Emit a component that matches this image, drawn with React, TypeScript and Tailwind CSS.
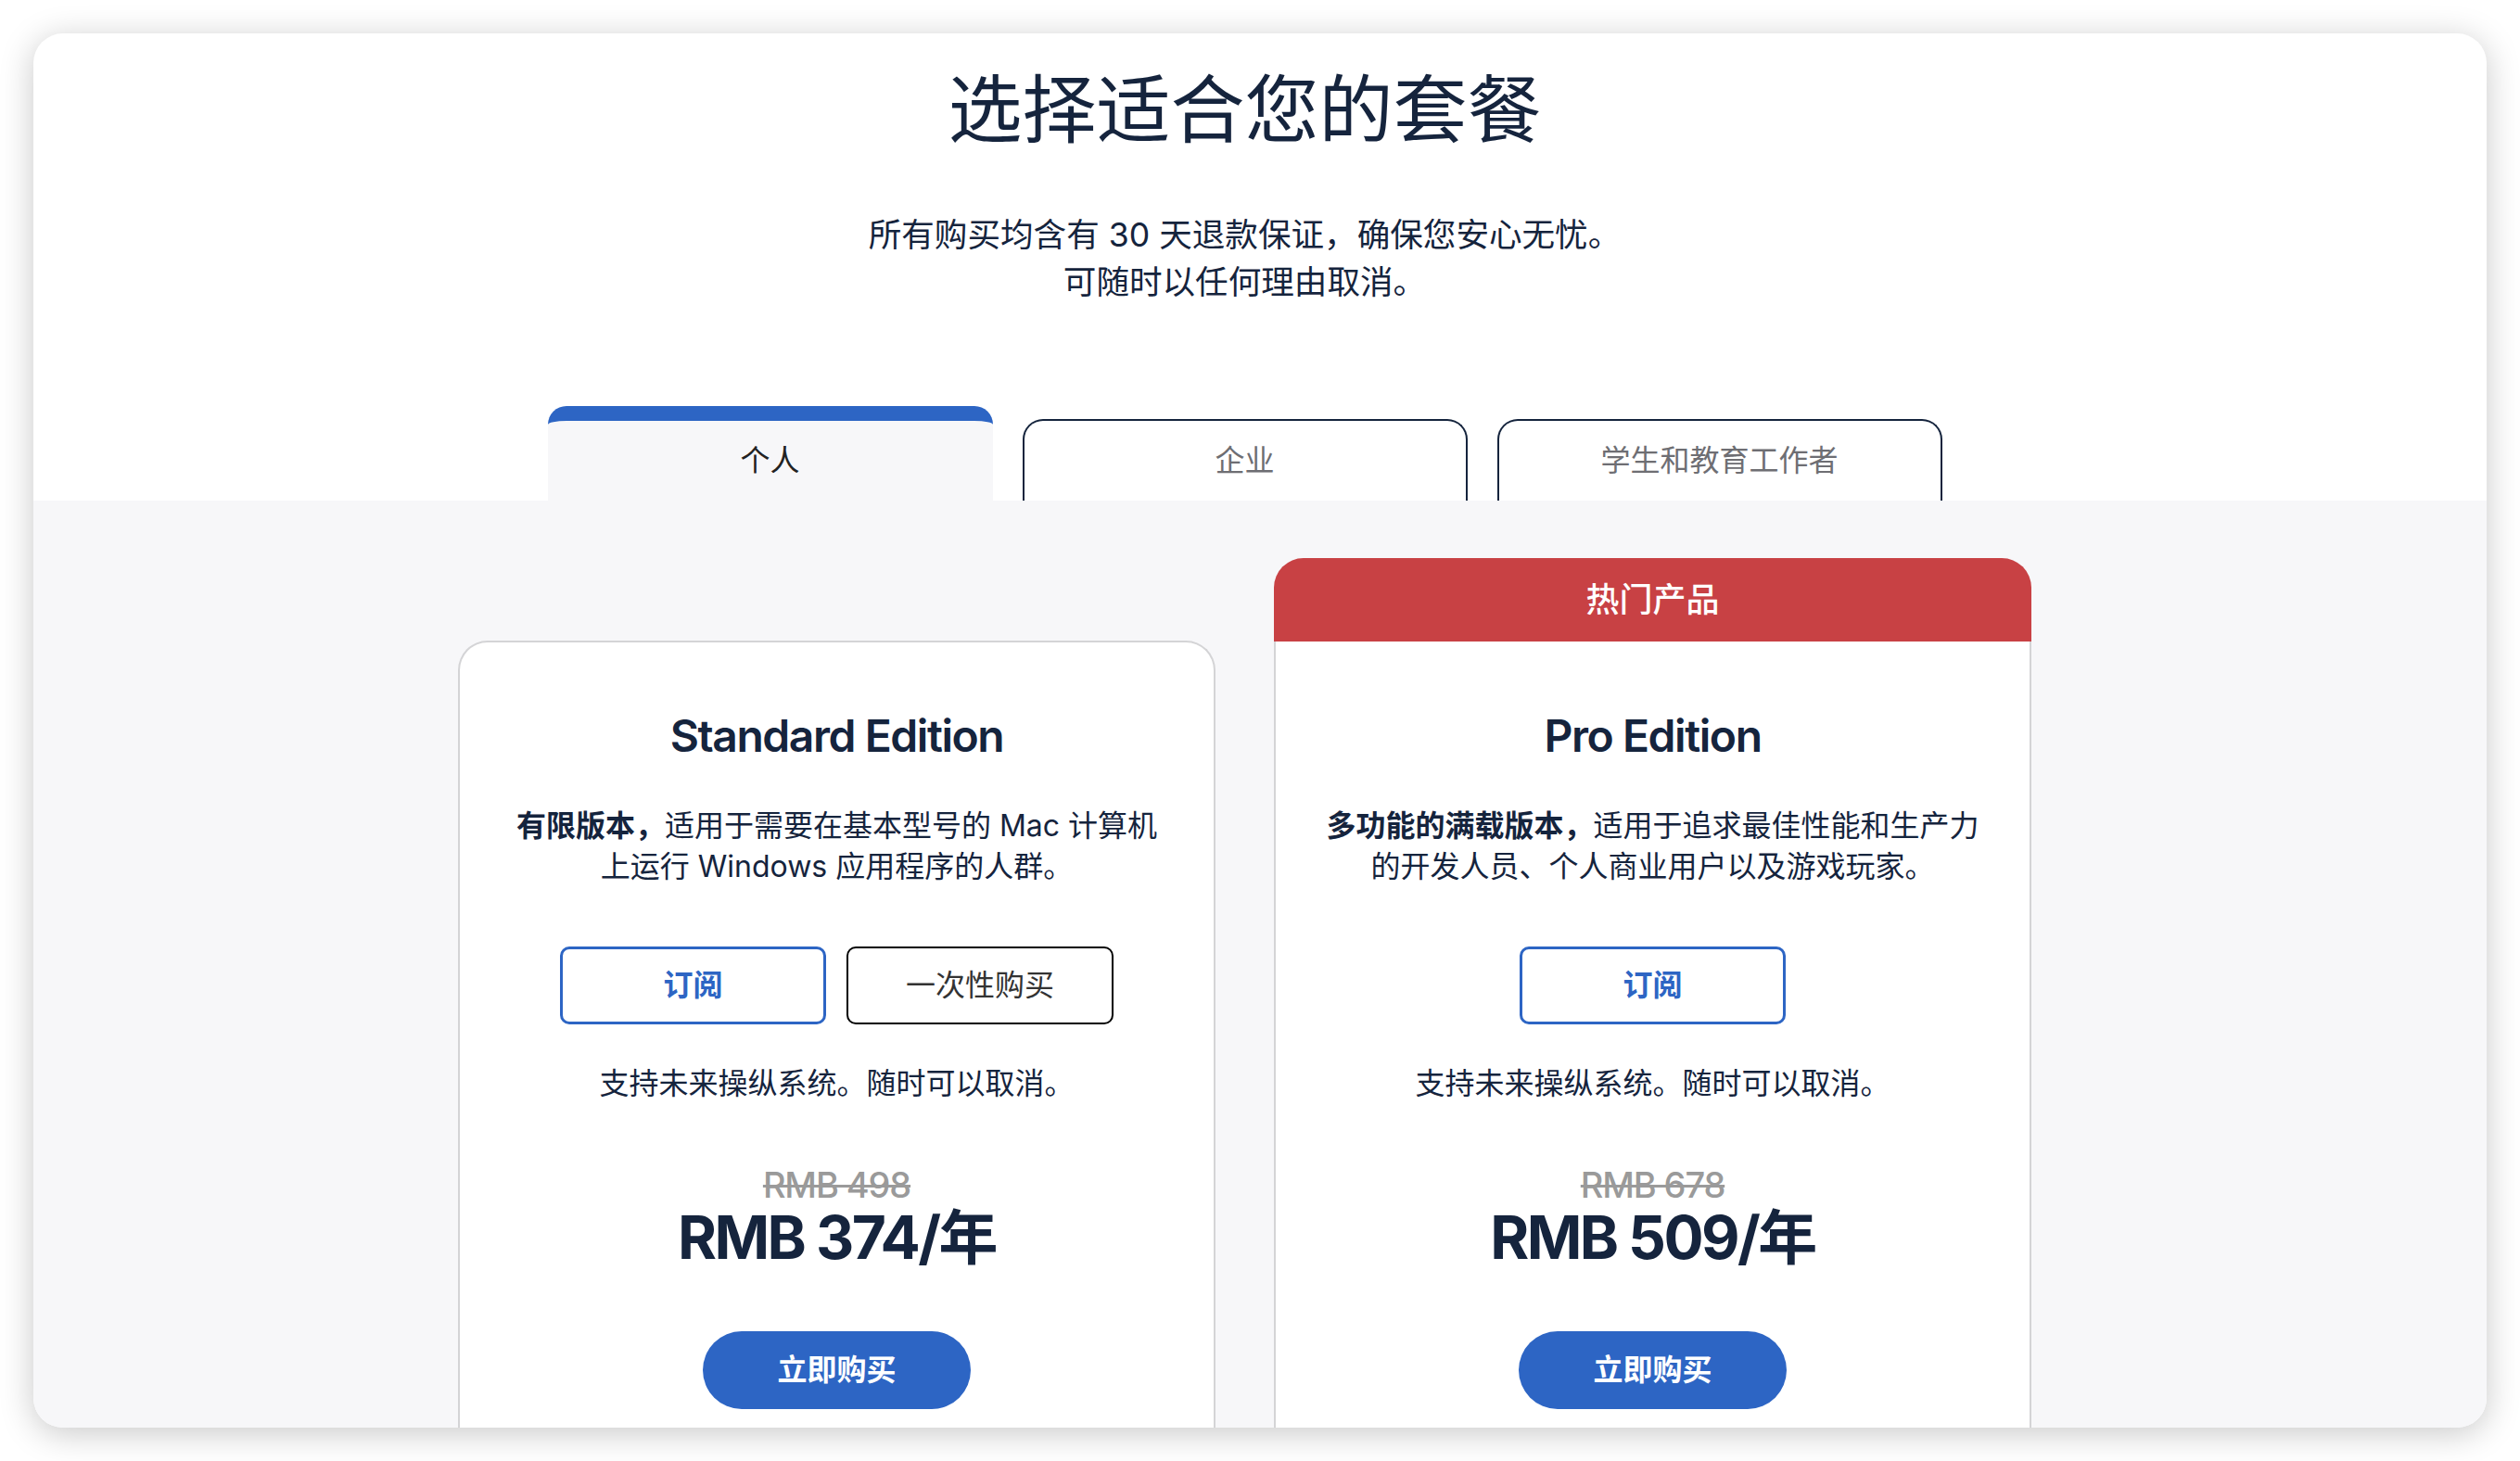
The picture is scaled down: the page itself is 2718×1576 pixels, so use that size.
import React from "react";

const FONT = { fontFamily: "Inter, 'Noto Sans CJK SC', sans-serif" };

interface Plan {
  name: string;
  lead: string;
  line1: string;
  line2: string;
  oneTime: boolean;
  oldPrice: string;
  price: string;
  popular: boolean;
}

const plans: Plan[] = [
  {
    name: "Standard Edition",
    lead: "有限版本，",
    line1: "适用于需要在基本型号的 Mac 计算机",
    line2: "上运行 Windows 应用程序的人群。",
    oneTime: true,
    oldPrice: "RMB 498",
    price: "RMB 374/年",
    popular: false,
  },
  {
    name: "Pro Edition",
    lead: "多功能的满载版本，",
    line1: "适用于追求最佳性能和生产力",
    line2: "的开发人员、个人商业用户以及游戏玩家。",
    oneTime: false,
    oldPrice: "RMB 678",
    price: "RMB 509/年",
    popular: true,
  },
];

function PlanBody({ plan }: { plan: Plan }) {
  return (
    <div className="flex flex-col items-center text-center text-[#15243d]">
      <h3 className="text-[48px] leading-[58px] font-semibold tracking-[-0.03em]">{plan.name}</h3>
      <p className="mt-[46px] text-[32px] leading-[44px]">
        <strong className="font-bold">{plan.lead}</strong>
        {plan.line1}
        <br />
        {plan.line2}
      </p>
      <div className="mt-[64px] flex gap-[22px]">
        <button className="w-[287px] h-[84px] rounded-[10px] border-[3px] border-[#2d65c4] text-[#2d65c4] text-[32px] font-bold flex items-center justify-center">
          订阅
        </button>
        {plan.oneTime && (
          <button className="w-[288px] h-[84px] rounded-[10px] border-2 border-black text-[#333] text-[32px] flex items-center justify-center">
            一次性购买
          </button>
        )}
      </div>
      <p className="mt-[42px] text-[32px] leading-[44px]">支持未来操纵系统。随时可以取消。</p>
      <p className="mt-[68px] text-[38px] leading-[38px] font-medium text-[#9a9a9a] tracking-[-0.03em] line-through decoration-[3px]">
        {plan.oldPrice}
      </p>
      <p className="mt-[4px] text-[64px] leading-[68px] font-bold tracking-[-0.04em]">{plan.price}</p>
      <button className="mt-[67px] w-[289px] h-[84px] rounded-full bg-[#2d65c4] text-white text-[32px] font-bold flex items-center justify-center">
        立即购买
      </button>
    </div>
  );
}

export default function App() {
  return (
    <div className="w-[2718px] h-[1576px] bg-white p-[36px]" style={FONT}>
      <div className="w-full h-full rounded-[32px] overflow-hidden bg-white shadow-[0_6px_36px_rgba(0,0,0,0.22)] flex flex-col">
        {/* header */}
        <div className="h-[504px] shrink-0 pr-[33px] flex flex-col items-center text-[#15243d]">
          <h1 className="mt-[34px] text-[80px] leading-[96px]">选择适合您的套餐</h1>
          <p className="mt-[62px] text-[35.6px] leading-[51px] text-center">
            所有购买均含有 30 天退款保证，确保您安心无忧。
            <br />
            可随时以任何理由取消。
          </p>
          <div className="mt-auto flex items-end gap-[32px]">
            <div className="w-[480px] h-[102px] rounded-t-[20px] border-t-[16px] border-[#2d65c4] bg-[#f7f7f9] flex items-center justify-center text-[32px] text-[#222]">
              个人
            </div>
            <div className="w-[480px] h-[88px] rounded-t-[22px] border-2 border-b-0 border-[#15243d] bg-white flex items-center justify-center text-[32px] text-[#6e6e73]">
              企业
            </div>
            <div className="w-[480px] h-[88px] rounded-t-[22px] border-2 border-b-0 border-[#15243d] bg-white flex items-center justify-center text-[32px] text-[#6e6e73]">
              学生和教育工作者
            </div>
          </div>
        </div>

        {/* plans */}
        <div className="flex-1 bg-[#f7f7f9] pt-[62px] pr-[33px] flex justify-center">
          <div className="grid grid-cols-2 gap-[63px] w-[1697px] items-start">
            {plans.map((plan) =>
              plan.popular ? (
                <div key={plan.name} className="flex flex-col">
                  <div className="h-[90px] rounded-t-[32px] bg-[#c84144] text-white text-[36px] font-medium flex items-center justify-center">
                    热门产品
                  </div>
                  <div className="h-[900px] bg-white border-2 border-t-0 border-[#d4d4d6] pt-[73px]">
                    <PlanBody plan={plan} />
                  </div>
                </div>
              ) : (
                <div
                  key={plan.name}
                  className="mt-[89px] h-[900px] rounded-t-[32px] bg-white border-2 border-b-0 border-[#d4d4d6] pt-[72px]"
                >
                  <PlanBody plan={plan} />
                </div>
              )
            )}
          </div>
        </div>
      </div>
    </div>
  );
}
